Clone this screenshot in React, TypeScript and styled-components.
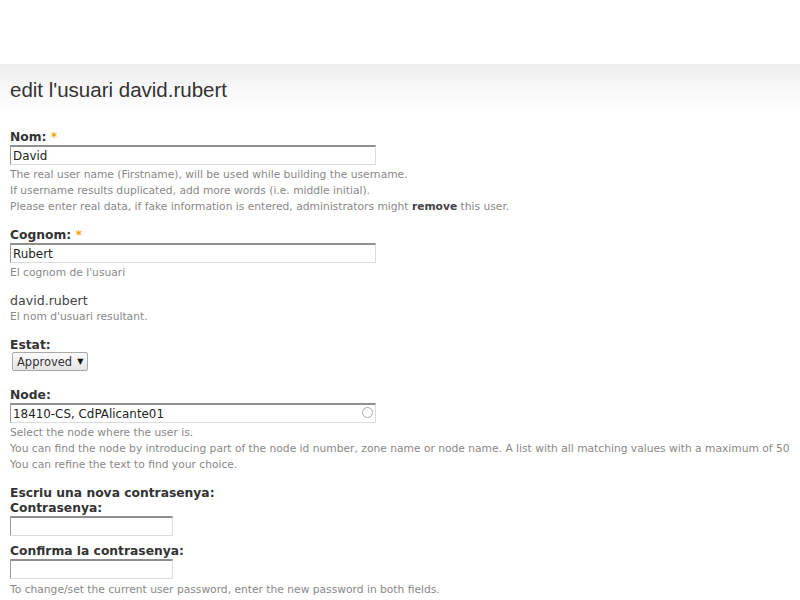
import styled, { createGlobalStyle } from 'styled-components'

const GlobalStyle = createGlobalStyle`
  body {
    margin: 0;
    background: #fff;
    font-family: "DejaVu Sans", Verdana, sans-serif;
    color: #333;
  }
`

const Page = styled.div`
  padding-top: 64px;
  overflow: hidden;
`

const TitleBar = styled.div`
  height: 51px;
  display: flex;
  align-items: center;
  padding-left: 10px;
  background: linear-gradient(to bottom, #eeeeee 0%, #f7f7f7 45%, #ffffff 100%);
`

const Title = styled.h1`
  margin: 0;
  font-family: "Liberation Sans", Arial, sans-serif;
  font-size: 20.5px;
  font-weight: normal;
  color: #333;
`

const Form = styled.form`
  padding: 15px 10px 0 10px;
`

const Item = styled.div<{ $gap?: number }>`
  display: flow-root;
  margin-bottom: ${(p) => p.$gap ?? 13}px;
`

const Label = styled.div`
  font-size: 12.3px;
  font-weight: bold;
  line-height: 15px;
  color: #333;
`

const Required = styled.span`
  color: #f2a500;
`

const TextField = styled.div<{ $width: number }>`
  position: relative;
  width: ${(p) => p.$width}px;
`

const Input = styled.input`
  display: block;
  box-sizing: border-box;
  width: 100%;
  height: 20px;
  padding: 0 2px;
  border-style: solid;
  border-width: 1px;
  border-color: #8f8f8f #dcdcdc #dcdcdc #9a9a9a;
  border-top-width: 2px;
  font-family: "DejaVu Sans", Verdana, sans-serif;
  font-size: 11.9px;
  color: #222;
  background: #fff;
  outline: none;
`

const Throbber = styled.span`
  position: absolute;
  right: 3px;
  top: 4px;
  width: 9px;
  height: 9px;
  border: 1.5px solid #a8a8a8;
  border-radius: 50%;
`

const Description = styled.div<{ $offset?: number }>`
  margin-top: ${(p) => p.$offset ?? 2}px;
  font-size: 10.7px;
  line-height: 16px;
  color: #888;
  white-space: nowrap;

  strong {
    color: #444;
  }
`

const Value = styled.div`
  font-size: 12.6px;
  line-height: 14px;
  color: #444;
`

const SelectBox = styled.div`
  display: flex;
  align-items: center;
  gap: 5px;
  width: fit-content;
  box-sizing: border-box;
  height: 19px;
  margin: -1px 0 4px 2px;
  padding: 0 4px;
  border: 1px solid #a9a9a9;
  border-radius: 2px;
  background: linear-gradient(to bottom, #fbfbfb, #e4e4e4);
  font-size: 11.5px;
  color: #333;
`

const Arrow = styled.span`
  font-size: 8px;
  color: #111;
`

const App = () => {
  return (
    <Page>
      <GlobalStyle />
      <TitleBar>
        <Title>edit l'usuari david.rubert</Title>
      </TitleBar>
      <Form>
        <Item>
          <Label>
            Nom: <Required>*</Required>
          </Label>
          <TextField $width={366}>
            <Input value="David" readOnly />
          </TextField>
          <Description>
            The real user name (Firstname), will be used while building the username.
            <br />
            If username results duplicated, add more words (i.e. middle initial).
            <br />
            Please enter real data, if fake information is entered, administrators might{' '}
            <strong>remove</strong> this user.
          </Description>
        </Item>
        <Item>
          <Label>
            Cognom: <Required>*</Required>
          </Label>
          <TextField $width={366}>
            <Input value="Rubert" readOnly />
          </TextField>
          <Description>El cognom de l'usuari</Description>
        </Item>
        <Item>
          <Value>david.rubert</Value>
          <Description $offset={1}>El nom d'usuari resultant.</Description>
        </Item>
        <Item>
          <Label>Estat:</Label>
          <SelectBox>
            Approved <Arrow>▼</Arrow>
          </SelectBox>
        </Item>
        <Item>
          <Label>Node:</Label>
          <TextField $width={366}>
            <Input value="18410-CS, CdPAlicante01" readOnly />
            <Throbber />
          </TextField>
          <Description>
            Select the node where the user is.
            <br />
            You can find the node by introducing part of the node id number, zone name or node name. A list with all matching values with a maximum of 50
            <br />
            You can refine the text to find your choice.
          </Description>
        </Item>
        <Item $gap={8}>
          <Label>Escriu una nova contrasenya:</Label>
          <Label>Contrasenya:</Label>
          <TextField $width={163}>
            <Input type="password" readOnly />
          </TextField>
        </Item>
        <Item>
          <Label>Confirma la contrasenya:</Label>
          <TextField $width={163}>
            <Input type="password" readOnly />
          </TextField>
          <Description $offset={3}>
            To change/set the current user password, enter the new password in both fields.
          </Description>
        </Item>
      </Form>
    </Page>
  )
}

export default App
